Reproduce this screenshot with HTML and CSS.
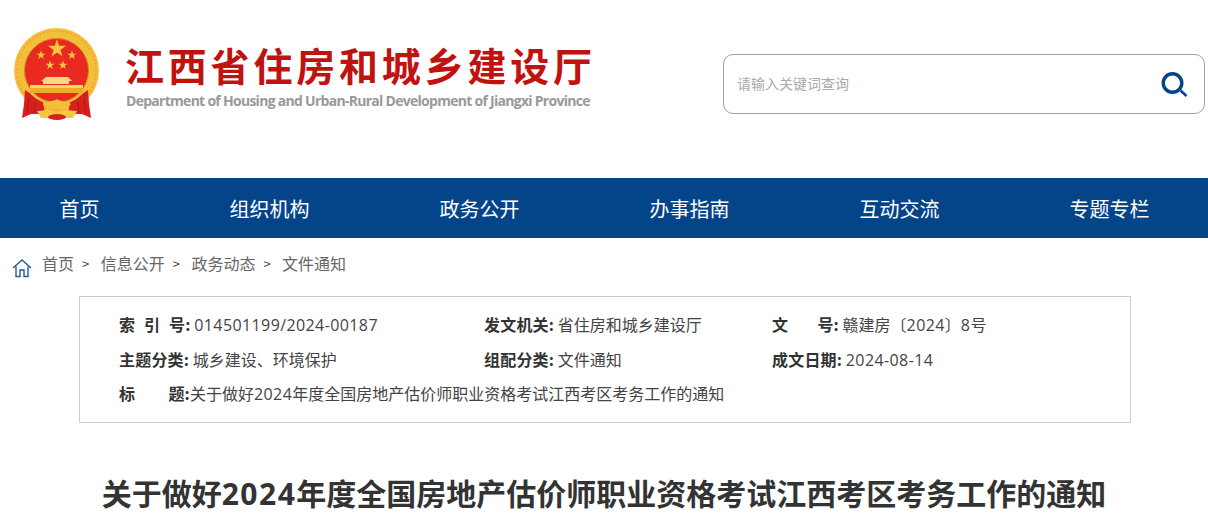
FILE: index.html
```html
<!DOCTYPE html>
<html lang="zh-CN">
<head>
<meta charset="utf-8">
<title>关于做好2024年度全国房地产估价师职业资格考试江西考区考务工作的通知</title>
<link rel="stylesheet" href="styles.css">
</head>
<body>
<header class="header">
  <svg class="emblem" width="88" height="92" viewBox="0 0 88 92" aria-hidden="true">
    <circle cx="43.500" cy="42.500" r="42.500" fill="#f4bd3a"/>
    <circle cx="43.500" cy="42.500" r="39.500" fill="none" stroke="#e8a62c" stroke-width="1.500" stroke-dasharray="2 2"/>
    <path d="M12 62 L30 74 L32 86 L18 86 L9 90 L11 76Z" fill="#d8201c"/>
    <path d="M75 62 L57 74 L55 86 L69 86 L78 90 L76 76Z" fill="#d8201c"/>
    <path d="M16 70 L14 86 M22 74 L21 85 M65 74 L66 85 M71 70 L73 86" stroke="#b01512" stroke-width="1" fill="none"/>
    <path d="M14.500 58 A 34 34 0 0 0 72.500 58" fill="none" stroke="#f4bd3a" stroke-width="5"/>
    <circle cx="43.500" cy="42.500" r="32" fill="#ea2a20" stroke="#c98a1e" stroke-width="1"/>
    <polygon points="44,11 46.100,17.700 53,17.700 47.400,21.900 49.500,28.500 44,24.400 38.500,28.500 40.600,21.900 35,17.700 41.900,17.700" fill="#f6c83f"/>
    <polygon points="28,22.500 29.100,25.700 32.500,25.700 29.700,27.700 30.800,31 28,29 25.200,31 26.300,27.700 23.500,25.700 26.900,25.700" fill="#f6c83f"/>
    <polygon points="59,22.500 60.100,25.700 63.500,25.700 60.700,27.700 61.800,31 59,29 56.200,31 57.300,27.700 54.500,25.700 57.900,25.700" fill="#f6c83f"/>
    <polygon points="37,32.500 38.100,35.700 41.500,35.700 38.700,37.700 39.800,41 37,39 34.200,41 35.300,37.700 32.500,35.700 35.900,35.700" fill="#f6c83f"/>
    <polygon points="50,32.500 51.100,35.700 54.500,35.700 51.700,37.700 52.800,41 50,39 47.200,41 48.300,37.700 45.500,35.700 48.900,35.700" fill="#f6c83f"/>
    <path d="M33 49 H55 L59 53 H56 V56 H30 V53 H28Z" fill="#f9d980"/>
    <path d="M17 57 H70 V60 H17Z" fill="#f9d566"/>
    <path d="M17 60 H70 L70 65 H17Z" fill="#f0aa2c"/>
    <path d="M30 76 C36 72 40 74 44 71 C48 74 52 72 58 76 L53 81 H35Z" fill="#f4bd3a"/>
    <path d="M24 83 L36 82 L44 85 L52 82 L64 83 L60 90 H53 L44 87 L35 90 H28Z" fill="#f6c83f"/>
    <ellipse cx="44" cy="89" rx="9" ry="3" fill="#d8201c"/>
  </svg>
  <div class="brand">
    <div class="brand-cn">江西省住房和城乡建设厅</div>
    <div class="brand-en">Department of Housing and Urban-Rural Development of Jiangxi Province</div>
  </div>
  <form class="search">
    <span class="search-hint">请输入关键词查询</span>
    <svg class="search-icon" width="28" height="28" viewBox="0 0 28 28" aria-hidden="true">
      <circle cx="11.500" cy="12" r="9.300" fill="none" stroke="#04458a" stroke-width="3.400"/>
      <path d="M19.500 19.500 L25.500 25" stroke="#04458a" stroke-width="2.600"/>
    </svg>
  </form>
</header>
<nav class="nav">
  <a>首页</a><a>组织机构</a><a>政务公开</a><a>办事指南</a><a>互动交流</a><a>专题专栏</a>
</nav>
<div class="crumbs">
  <svg class="home" width="20" height="20" viewBox="0 0 20 20" aria-hidden="true">
    <path d="M1 10 L10 2 L19 10 M4 8.500 V18.500 H8 V12 H12 V18.500 H16 V8.500" fill="none" stroke="#1a5f9e" stroke-width="1.400"/>
  </svg>
  <a>首页</a><i>&gt;</i><a>信息公开</a><i>&gt;</i><a>政务动态</a><i>&gt;</i><a>文件通知</a>
</div>
<section class="meta">
  <div class="cell c1"><b class="sp1">索 引 号:</b> <span class="num">014501199/2024-00187</span></div>
  <div class="cell c2"><b>发文机关:</b> 省住房和城乡建设厅</div>
  <div class="cell c3"><b class="sp2"><span>文</span><span>号:</span></b> 赣建房〔<span class="num">2024</span>〕<span class="num">8</span>号</div>
  <div class="cell c1"><b>主题分类:</b> 城乡建设、环境保护</div>
  <div class="cell c2"><b>组配分类:</b> 文件通知</div>
  <div class="cell c3"><b>成文日期:</b> <span class="num">2024-08-14</span></div>
  <div class="cell full"><b class="sp3"><span>标</span><span>题:</span></b>关于做好<span class="num">2024</span>年度全国房地产估价师职业资格考试江西考区考务工作的通知</div>
</section>
<h1 class="title">关于做好<span class="title-num">2024</span>年度全国房地产估价师职业资格考试江西考区考务工作的通知</h1>
</body>
</html>
```
FILE: styles.css
```css
* { box-sizing: border-box; }
html, body { margin: 0; padding: 0; }
body {
  width: 1208px;
  height: 515px;
  overflow: hidden;
  background: #fff;
  font-family: "Noto Sans CJK SC", "Open Sans", sans-serif;
  color: #333;
}
.header {
  height: 178px;
  display: flex;
  align-items: flex-start;
  padding: 28px 3px 0 13px;
}
.emblem { flex: none; }
.brand { margin-left: 24px; padding-top: 13px; width: 561px; }
.brand-cn {
  font-size: 39px;
  line-height: 47px;
  font-weight: 700;
  letter-spacing: 3.800px;
  color: #c0130f;
  white-space: nowrap;
}
.brand-en {
  margin: 3px 0 0 1px;
  font-family: "Open Sans", sans-serif;
  font-size: 14px;
  line-height: 20px;
  font-weight: 700;
  letter-spacing: -0.72px;
  color: #999;
  white-space: nowrap;
}
.search {
  margin: 26px 0 0 auto;
  width: 482px;
  height: 60px;
  border: 1px solid #a0a0a0;
  border-radius: 10px;
  display: flex;
  align-items: center;
  justify-content: space-between;
  padding: 0 15px 2px 13px;
}
.search-hint { font-size: 14px; color: #aaa; }
.search-icon { flex: none; margin-top: 4px; }
.nav {
  height: 60px;
  background: #04458a;
  display: flex;
  align-items: center;
  gap: 130px;
  padding-left: 59.500px;
}
.nav a {
  color: #fff;
  font-size: 20px;
  white-space: nowrap;
}
.crumbs {
  height: 58px;
  display: flex;
  align-items: center;
  padding: 0 0 8px 12px;
  font-size: 16px;
  color: #666;
}
.home { flex: none; margin: 10px 10px 0 0; }
.crumbs i { font-style: normal; width: 26.700px; font-size: 13px; padding-left: 8px; color: #444; }
.meta {
  margin-left: 79px;
  width: 1052px;
  height: 127px;
  border: 1px solid #ccc;
  padding: 10px 0 0 39px;
  display: grid;
  grid-template-columns: 365px 288px 1fr;
  grid-auto-rows: 34.500px;
  align-items: center;
  font-size: 16px;
  color: #444;
}
.cell { white-space: nowrap; }
.cell b { color: #333; font-weight: 700; letter-spacing: 0.2px; }
.num { font-family: "Open Sans", sans-serif; letter-spacing: 0.4px; }
.sp1 { word-spacing: 5px; }
.sp2, .sp3 { display: inline-flex; justify-content: space-between; width: 67px; }
.sp3 { width: 71px; }
.full { grid-column: 1 / -1; }
.title {
  margin: 49px 0 0;
  text-align: center;
  font-size: 30px;
  line-height: 40px;
  font-weight: 700;
  color: #333;
  white-space: nowrap;
}
.title-num { font-family: "Open Sans", sans-serif; letter-spacing: 1.500px; }
```
